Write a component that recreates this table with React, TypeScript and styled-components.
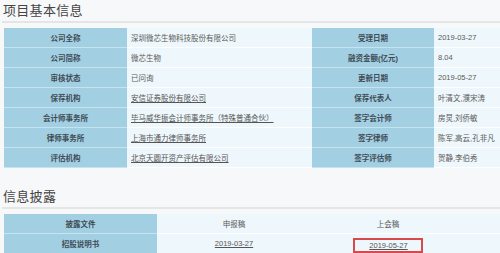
import React from "react";
import styled, { createGlobalStyle } from "styled-components";

const GlobalStyle = createGlobalStyle`
  html, body {
    margin: 0;
    padding: 0;
    background: #f7f8f9;
  }
  body {
    font-family: "Liberation Sans", "Noto Sans CJK SC", sans-serif;
    color: #555;
  }
`;

const Page = styled.div`
  width: 500px;
  height: 253px;
  overflow: hidden;
  padding-left: 4px;
  box-sizing: border-box;
`;

type titleProps = {
  top: number;
};

const SectionTitle = styled.h2<titleProps>`
  margin: ${(p) => p.top}px 0 0 -2px;
  padding: 0 0 0 1px;
  height: 17px;
  line-height: 13px;
  font-size: 13px;
  font-weight: normal;
  letter-spacing: 0.3px;
  color: #444;
  border-bottom: 2px solid #e4e5e6;
`;

type gridProps = {
  cols: string;
  top: number;
};

const InfoGrid = styled.div<gridProps>`
  display: grid;
  grid-template-columns: ${(p) => p.cols};
  grid-auto-rows: 20px;
  margin-top: ${(p) => p.top}px;
  font-size: 7.5px;
`;

const LabelCell = styled.div`
  display: flex;
  align-items: center;
  justify-content: center;
  background: #a3cfe3;
  color: #3f4c55;
  font-weight: bold;
  border-bottom: 1px solid #c6e3f0;
  white-space: nowrap;
`;

type valueProps = {
  center?: boolean;
};

const ValueCell = styled.div<valueProps>`
  display: flex;
  align-items: center;
  justify-content: ${(p) => (p.center ? "center" : "flex-start")};
  padding-left: ${(p) => (p.center ? 0 : 4)}px;
  background: #eef7fb;
  color: #5a5a5a;
  border-bottom: 1px solid #ffffff;
  white-space: nowrap;
  overflow: hidden;
`;

const LinkText = styled.span`
  text-decoration: underline;
  color: #555;
`;

const Marked = styled.span`
  border: 2px solid #d9484a;
  padding: 1px 13px 1px 14px;
  margin-top: 4px;
`;

const baseRows: [string, React.ReactNode, string, string][] = [
  ["公司全称", "深圳微芯生物科技股份有限公司", "受理日期", "2019-03-27"],
  ["公司简称", "微芯生物", "融资金额(亿元)", "8.04"],
  ["审核状态", "已问询", "更新日期", "2019-05-27"],
  ["保荐机构", <LinkText>安信证券股份有限公司</LinkText>, "保荐代表人", "叶清文,濮宋涛"],
  [
    "会计师事务所",
    <LinkText>毕马威华振会计师事务所（特殊普通合伙）</LinkText>,
    "签字会计师",
    "房炅,刘侨敏",
  ],
  ["律师事务所", <LinkText>上海市通力律师事务所</LinkText>, "签字律师", "陈军,高云,孔非凡"],
  ["评估机构", <LinkText>北京天圆开资产评估有限公司</LinkText>, "签字评估师", "贺静,李伯秀"],
];

export default function App() {
  return (
    <Page>
      <GlobalStyle />
      <SectionTitle top={4}>项目基本信息</SectionTitle>
      <InfoGrid cols="123px 185px 122px 1fr" top={5}>
        {baseRows.map(([l1, v1, l2, v2], i) => (
          <React.Fragment key={i}>
            <LabelCell>{l1}</LabelCell>
            <ValueCell>{v1}</ValueCell>
            <LabelCell>{l2}</LabelCell>
            <ValueCell>{v2}</ValueCell>
          </React.Fragment>
        ))}
      </InfoGrid>

      <SectionTitle top={22}>信息披露</SectionTitle>
      <InfoGrid cols="153px 154px 154px 1fr" top={5}>
        <LabelCell>披露文件</LabelCell>
        <ValueCell center>申报稿</ValueCell>
        <ValueCell center>上会稿</ValueCell>
        <ValueCell />
        <LabelCell>招股说明书</LabelCell>
        <ValueCell center>
          <LinkText>2019-03-27</LinkText>
        </ValueCell>
        <ValueCell center>
          <Marked>
            <LinkText>2019-05-27</LinkText>
          </Marked>
        </ValueCell>
        <ValueCell />
      </InfoGrid>
    </Page>
  );
}
